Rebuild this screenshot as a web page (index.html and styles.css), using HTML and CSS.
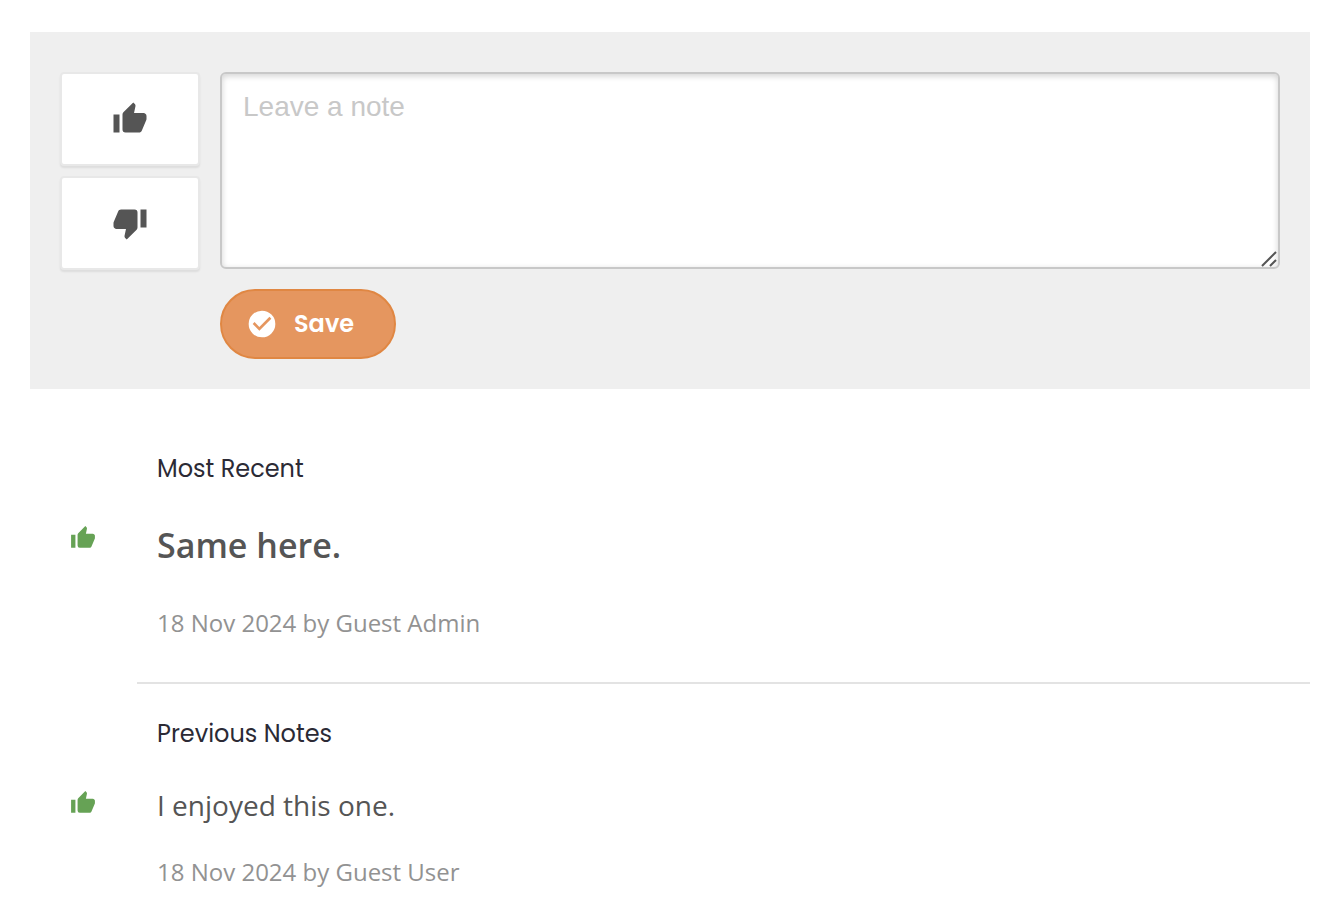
FILE: index.html
```html
<!DOCTYPE html>
<html lang="en">
<head>
<meta charset="utf-8">
<meta name="viewport" content="width=device-width, initial-scale=1">
<title>Notes</title>
<link rel="stylesheet" href="styles.css">
</head>
<body>
<svg class="sprite" aria-hidden="true">
  <symbol id="thumb" viewBox="0 0 24 24">
    <path d="M23 10c0-1.1-.9-2-2-2h-6.32l.96-4.57c.02-.1.03-.21.03-.32 0-.41-.17-.79-.44-1.06L14.17 1 7.59 7.58C7.22 7.95 7 8.45 7 9v10a2 2 0 0 0 2 2h9c.83 0 1.54-.5 1.84-1.22l3.02-7.05c.09-.23.14-.47.14-.73v-2M1 21h4V9H1v12z"/>
  </symbol>
</svg>
<main class="page">
  <form class="note-form">
    <div class="votes">
      <button class="vote" type="button" aria-label="Thumbs up"><svg class="vote-icon"><use href="#thumb"/></svg></button>
      <button class="vote" type="button" aria-label="Thumbs down"><svg class="vote-icon down"><use href="#thumb"/></svg></button>
    </div>
    <div class="editor">
      <div class="field">
        <textarea class="note-input" aria-label="Leave a note" placeholder="Leave a note"></textarea>
        <svg class="grip" viewBox="0 0 16 16" aria-hidden="true"><path d="M1 15 15 1M9 15l6-6"/></svg>
      </div>
      <button class="save" type="submit">
        <svg class="save-icon" viewBox="0 0 24 24" aria-hidden="true"><path d="M12 2a10 10 0 1 0 0 20 10 10 0 0 0 0-20zm-2 15-5-5 1.41-1.41L10 14.17l7.59-7.59L19 8l-9 9z"/></svg>
        <span>Save</span>
      </button>
    </div>
  </form>

  <section class="notes">
    <h2 class="heading">Most Recent</h2>
    <article class="note latest">
      <svg class="note-icon" role="img" aria-label="Liked"><use href="#thumb"/></svg>
      <div class="note-body">
        <p class="note-text">Same here.</p>
        <p class="note-meta">18 Nov 2024 by Guest Admin</p>
      </div>
    </article>
  </section>

  <section class="notes previous">
    <h2 class="heading">Previous Notes</h2>
    <article class="note">
      <svg class="note-icon" role="img" aria-label="Liked"><use href="#thumb"/></svg>
      <div class="note-body">
        <p class="note-text">I enjoyed this one.</p>
        <p class="note-meta">18 Nov 2024 by Guest User</p>
      </div>
    </article>
  </section>
</main>
</body>
</html>
```
FILE: styles.css
```css
* { box-sizing: border-box; }
body {
  margin: 0;
  background: #fff;
  color: #555;
  font-family: "Open Sans", "Noto Sans", sans-serif;
}
h2, p { margin: 0; }
.sprite { display: none; }
.page { padding: 32px 32px 0 30px; }

.note-form {
  display: flex;
  gap: 20px;
  padding: 40px 30px 30px;
  background: #efefef;
}
.votes {
  display: flex;
  flex-direction: column;
  gap: 10px;
  flex: 0 0 140px;
}
.vote {
  display: flex;
  align-items: center;
  justify-content: center;
  height: 94px;
  padding: 0;
  border: 2px solid #e8e8e8;
  border-radius: 4px;
  background: #fff;
  box-shadow: 0 2px 2px rgba(0, 0, 0, 0.08);
  cursor: pointer;
}
.vote-icon { width: 36px; height: 36px; fill: #555; }
.down { transform: rotate(180deg); }

.editor { flex: 1; min-width: 0; }
.field { position: relative; margin-bottom: 20px; }
.note-input {
  display: block;
  width: 100%;
  height: 197px;
  padding: 16px 21px;
  border: 2px solid #c8c8c8;
  border-radius: 6px;
  background: #fff;
  box-shadow: inset 0 2px 6px rgba(0, 0, 0, 0.18);
  color: #555;
  font: 28px/34px "Liberation Sans", Arial, sans-serif;
  resize: vertical;
}
.note-input::placeholder { color: #c8c8c8; }
.note-input::-webkit-resizer { display: none; }
.grip {
  position: absolute;
  right: 3px;
  bottom: 2px;
  width: 16px;
  height: 16px;
  fill: none;
  stroke: #555;
  stroke-width: 2;
  pointer-events: none;
}
.save {
  display: flex;
  align-items: center;
  gap: 16px;
  height: 70px;
  padding: 0 40px 0 24px;
  border: 2px solid #e08743;
  border-radius: 35px;
  background: #e5965f;
  color: #fff;
  font: 600 24px/36px Poppins, Inter, sans-serif;
  cursor: pointer;
}
.save-icon { width: 32px; height: 32px; fill: #fff; }

.notes { padding-top: 60px; }
.previous { padding-top: 30px; }
.heading {
  padding-left: 127px;
  color: #2b2a35;
  font: 400 24px/40px Poppins, Inter, sans-serif;
}
.note { display: flex; }
.note-icon {
  flex: none;
  width: 26px;
  height: 26px;
  margin: 36px 41px 0 40px;
  fill: #66a255;
}
.note-body {
  flex: 1;
  padding: 30px 20px 28px;
}
.note-text { font-size: 28px; line-height: 42px; }
.latest .note-text { font-size: 34px; line-height: 52px; font-weight: 600; }
.note-meta {
  margin-top: 28px;
  color: #929292;
  font-size: 24px;
  line-height: 36px;
}
.latest .note-meta { margin-top: 34px; }
.latest .note-body {
  padding-bottom: 41px;
  border-bottom: 2px solid #e3e3e3;
}
```
